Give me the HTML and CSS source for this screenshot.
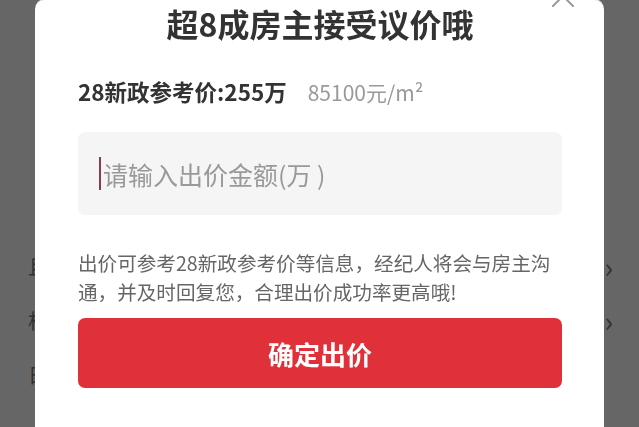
FILE: index.html
```html
<!DOCTYPE html>
<html lang="zh-CN">
<head>
<meta charset="utf-8">
<title>出价</title>
<link rel="stylesheet" href="styles.css">
</head>
<body>
<div class="page">
  <div class="row"><span class="row-label">且</span><span class="row-arrow">›</span></div>
  <div class="row"><span class="row-label">相</span><span class="row-arrow">›</span></div>
  <div class="row"><span class="row-label">日</span><span class="row-arrow"></span></div>
</div>
<div class="overlay"></div>
<div class="modal">
  <span class="close" aria-label="关闭">
    <svg width="22" height="22" viewBox="0 0 22 22"><path d="M1 1L21 21M21 1L1 21" stroke="#999" stroke-width="2" fill="none" stroke-linecap="round"/></svg>
  </span>
  <h1 class="title">超8成房主接受议价哦</h1>
  <div class="price">
    <span class="price-main">28新政参考价:255万</span>
    <span class="price-unit">85100元/m²</span>
  </div>
  <div class="input">
    <span class="caret"></span>
    <span class="placeholder">请输入出价金额(万 )</span>
  </div>
  <p class="desc">出价可参考28新政参考价等信息，经纪人将会与房主沟通，并及时回复您，合理出价成功率更高哦!</p>
  <button class="submit">确定出价</button>
</div>
</body>
</html>
```
FILE: styles.css
```css
* { box-sizing: border-box; }
html, body {
  margin: 0;
  padding: 0;
  height: 100%;
  overflow: hidden;
}
body {
  background: #fff;
  font-family: "Noto Sans CJK SC", "Noto Sans", sans-serif;
}
.page {
  padding-top: 239px;
  display: flex;
  flex-direction: column;
}
.row {
  height: 54px;
  display: flex;
  justify-content: space-between;
  align-items: center;
  padding: 0 26px 0 28px;
  font-size: 20px;
  color: #7a7a7a;
}
.row-arrow {
  font-size: 28px;
  color: #7a7a7a;
}
.overlay {
  position: fixed;
  inset: 0;
  background: rgba(0, 0, 0, 0.6);
}
.modal {
  position: fixed;
  left: 35px;
  width: 569px;
  top: -1px;
  bottom: -20px;
  background: #fff;
  border-top: 1px solid #ddd;
  border-radius: 10px;
  padding: 0 42px 0 43px;
  display: flex;
  flex-direction: column;
}
.close {
  position: absolute;
  right: 30px;
  top: -15px;
  width: 22px;
  height: 22px;
  display: block;
}
.close svg { display: block; }
.title {
  margin: 0;
  font-size: 32px;
  line-height: 46px;
  font-weight: 700;
  color: #333;
  text-align: center;
}
.price {
  margin-top: 30px;
  display: flex;
  align-items: baseline;
  gap: 21px;
  line-height: 30px;
}
.price-main {
  font-size: 22.5px;
  font-weight: 700;
  color: #333;
}
.price-unit {
  font-size: 21px;
  color: #999;
}
.input {
  margin-top: 25px;
  height: 83px;
  background: #f5f5f5;
  border-radius: 7px;
  display: flex;
  align-items: center;
  padding-left: 21px;
}
.caret {
  width: 2px;
  height: 33px;
  background: #8c3a4c;
  margin-right: 2px;
}
.placeholder {
  font-size: 25px;
  color: #999;
}
.desc {
  margin: 33px 0 0;
  font-size: 19.6px;
  line-height: 29px;
  color: #666;
}
.submit {
  margin-top: 12px;
  height: 70px;
  width: 100%;
  border: none;
  border-radius: 7px;
  background: #e0313a;
  color: #fff;
  font-family: inherit;
  font-size: 26px;
  font-weight: 700;
  padding: 0;
}
```
